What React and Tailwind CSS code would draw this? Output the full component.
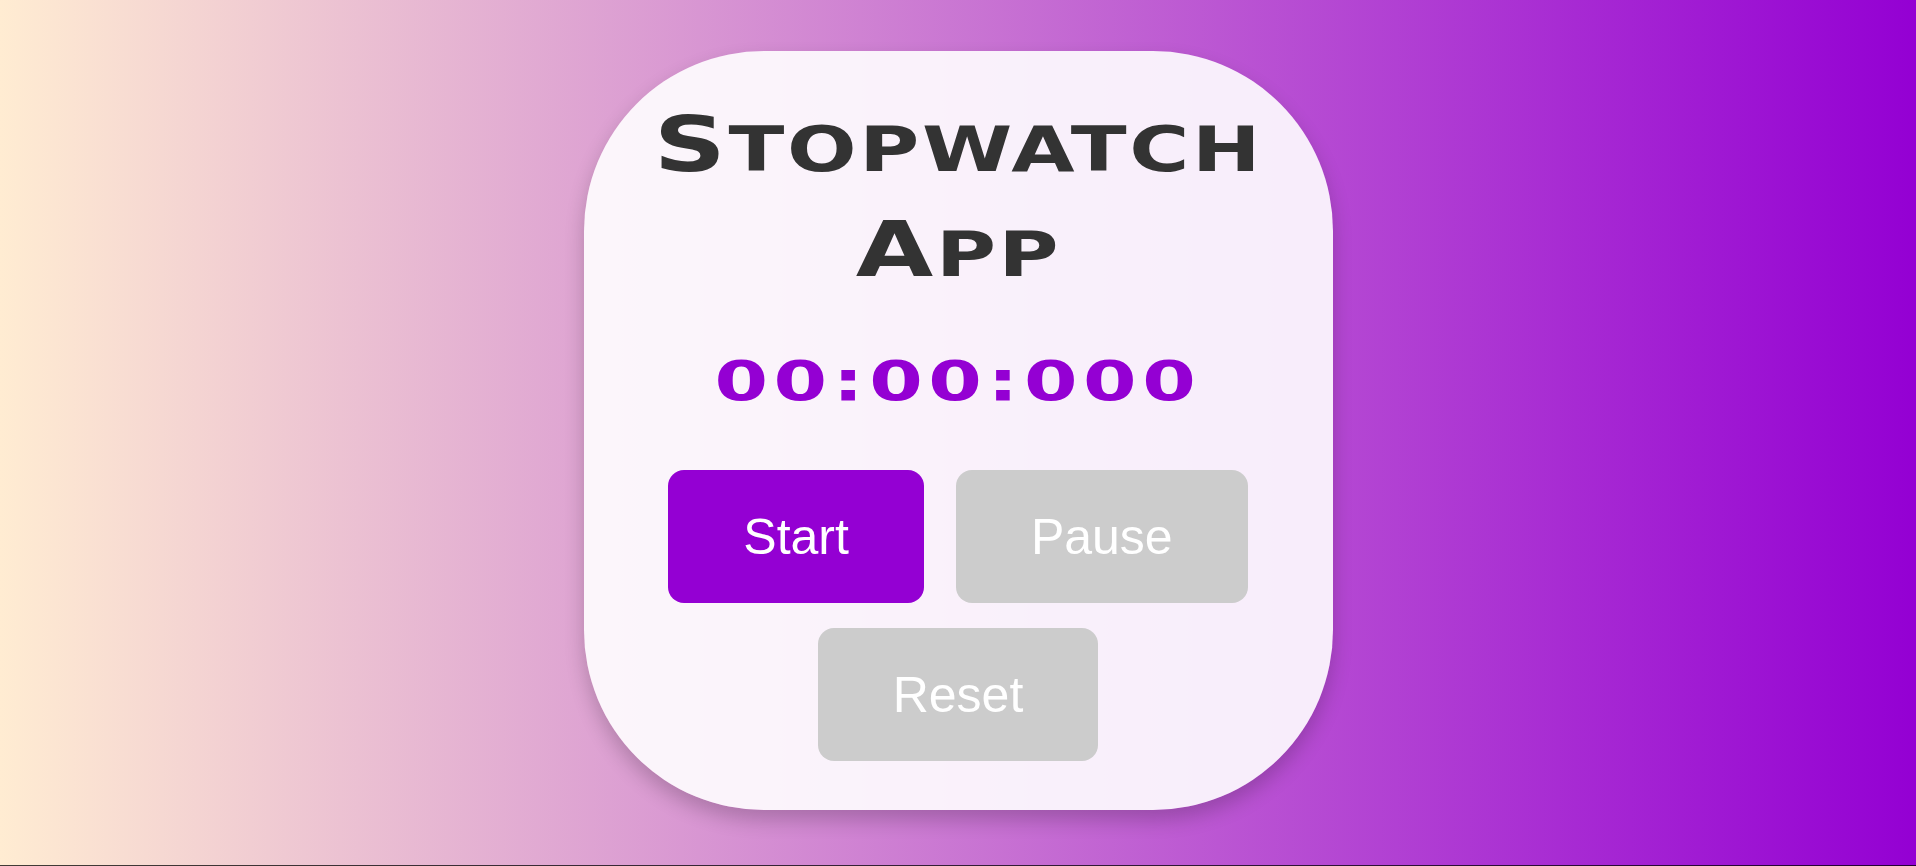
export default function App() {
  return (
    <div className="h-[866px] flex flex-col bg-[linear-gradient(to_right,#ffecd2,#9400d3)] overflow-hidden">
      <div className="flex-1 flex justify-center items-start pt-[51px]">
        <div className="w-[749px] h-[759px] rounded-[180px] bg-white/90 shadow-[0_10px_20px_rgba(0,0,0,0.2)] flex flex-col items-center pt-[41px]">
          <h1 className="w-full text-center text-[#333333] font-bold text-[77px] leading-[105px] font-['DejaVu_Sans',sans-serif]">
            <span className="block scale-x-[1.3] tracking-[2px]">
              S<span className="uppercase text-[63px] leading-[60px]">topwatch</span>
            </span>
            <span className="block scale-x-[1.3] tracking-[2px]">
              A<span className="uppercase text-[63px] leading-[60px]">pp</span>
            </span>
          </h1>
          <div className="mt-[47px] text-[55px] leading-[64px] font-bold text-[#9400d3] tracking-[4px] scale-x-[1.4] font-['DejaVu_Sans',sans-serif]">
            00:00:000
          </div>
          <div className="mt-[57px] flex flex-col items-center gap-[25px] font-['Liberation_Sans',Arial,sans-serif]">
            <div className="flex gap-[32px]">
              <button className="bg-[#9400d3] text-white text-[50px] leading-[58px] px-[75px] py-[37.5px] rounded-[16px] font-['Liberation_Sans',Arial,sans-serif]">
                Start
              </button>
              <button className="bg-[#cccccc] text-white text-[50px] leading-[58px] px-[75px] py-[37.5px] rounded-[16px] font-['Liberation_Sans',Arial,sans-serif]">
                Pause
              </button>
            </div>
            <button className="bg-[#cccccc] text-white text-[50px] leading-[58px] px-[75px] py-[37.5px] rounded-[16px] font-['Liberation_Sans',Arial,sans-serif]">
              Reset
            </button>
          </div>
        </div>
      </div>
      <div className="h-px bg-black/75" />
    </div>
  );
}
